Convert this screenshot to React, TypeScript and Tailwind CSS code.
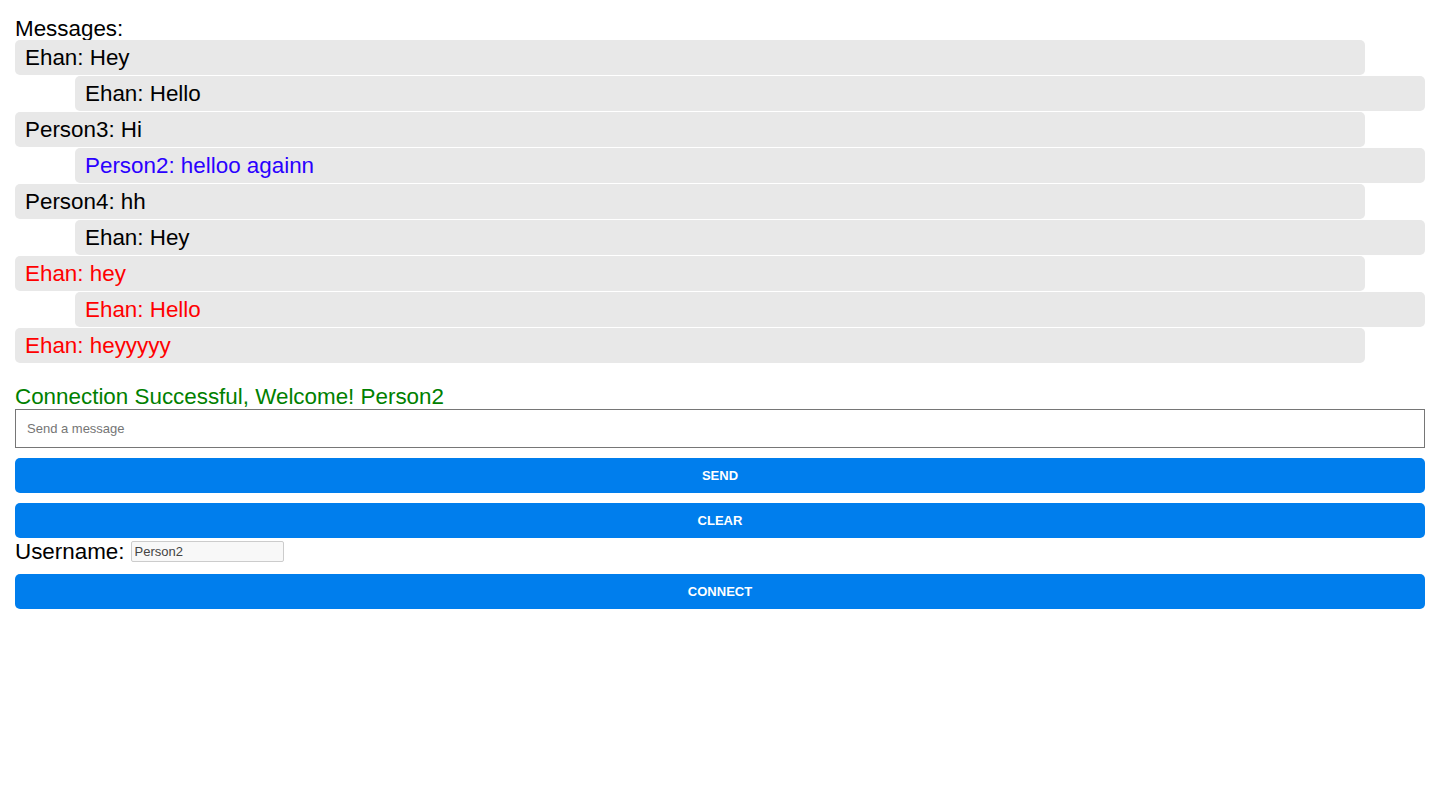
import React from "react";

const msgs: { text: string; color: string }[] = [
  { text: "Ehan: Hey", color: "text-black" },
  { text: "Ehan: Hello", color: "text-black" },
  { text: "Person3: Hi", color: "text-black" },
  { text: "Person2: helloo againn", color: "text-[#2a00ff]" },
  { text: "Person4: hh", color: "text-black" },
  { text: "Ehan: Hey", color: "text-black" },
  { text: "Ehan: hey", color: "text-[#ff0000]" },
  { text: "Ehan: Hello", color: "text-[#ff0000]" },
  { text: "Ehan: heyyyyy", color: "text-[#ff0000]" },
];

export default function App() {
  return (
    <div
      className="min-h-[812px] bg-white px-[15px] pt-[17px] text-black"
      style={{ fontFamily: '"Liberation Sans", Arial, sans-serif' }}
    >
      <div className="text-[22.4px] leading-[23px]">Messages:</div>
      <div className="flex flex-col gap-[1px]">
        {msgs.map((m, i) => (
          <div
            key={i}
            className={`flex h-[35px] w-[1350px] items-center rounded-[5px] bg-[#e8e8e8] pl-[10px] text-[22.4px] leading-[23px] ${m.color} ${
              i % 2 === 1 ? "ml-[60px]" : ""
            }`}
          >
            {m.text}
          </div>
        ))}
      </div>
      <div className="mt-[22px] text-[22.4px] leading-[23px] text-[#008000]">
        Connection Successful, Welcome! Person2
      </div>
      <input
        className="mt-[1px] block h-[39px] w-full border border-[#767676] px-[11px] text-[13px] placeholder:text-[#757575] outline-none"
        placeholder="Send a message"
      />
      <button className="mt-[10px] flex h-[35px] w-full items-center justify-center rounded-[5px] bg-[#007eed] text-[13px] font-bold text-white">
        SEND
      </button>
      <button className="mt-[10px] flex h-[35px] w-full items-center justify-center rounded-[5px] bg-[#007eed] text-[13px] font-bold text-white">
        CLEAR
      </button>
      <div className="flex h-[26px] items-center text-[22.4px] leading-[23px]">
        <span>Username:</span>
        <input
          className="ml-[6px] h-[21px] w-[153px] rounded-[2px] border border-[#cccccc] bg-[#f8f8f8] px-[3px] text-[13px] text-[#444] outline-none"
          defaultValue="Person2"
        />
      </div>
      <button className="mt-[10px] flex h-[35px] w-full items-center justify-center rounded-[5px] bg-[#007eed] text-[13px] font-bold text-white">
        CONNECT
      </button>
    </div>
  );
}
